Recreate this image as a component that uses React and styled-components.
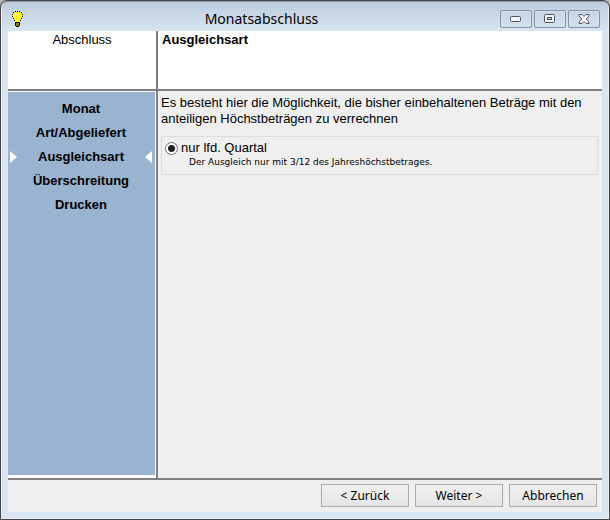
import React from "react";
import styled, { createGlobalStyle } from "styled-components";

const GlobalStyle = createGlobalStyle`
  * {
    box-sizing: border-box;
  }
  body {
    margin: 0;
    background-color: #b5b5b3;
    color: #000;
    font-family: "Liberation Sans", Arial, sans-serif;
    font-size: 13px;
    line-height: 16px;
  }
`;

const Window = styled.div`
  display: flex;
  flex-direction: column;
  min-height: 100vh;
  padding: 0 7px 7px;
  border: 1px solid #45464b;
  border-radius: 7px 7px 0 0;
  background: linear-gradient(#bccbdc, #d7e4f2 30px);
  box-shadow: inset 0 1px #8d98a6, inset 1px 0 #e6eef7, inset -1px -1px #e6eef7;
`;

const TitleBar = styled.header`
  display: grid;
  grid-template-columns: auto 1fr auto;
  align-items: center;
  height: 30px;
  padding: 6px 2px 0 4px;
`;

const Title = styled.h1`
  margin: 0;
  font-family: "Noto Sans", sans-serif;
  font-size: 14px;
  font-weight: 400;
  line-height: 20px;
  text-align: center;
`;

const WindowControls = styled.div`
  display: flex;
  justify-content: flex-end;
  gap: 2px;
`;

const ControlButton = styled.button`
  display: flex;
  align-items: center;
  justify-content: center;
  width: 32px;
  height: 18px;
  padding: 0;
  border: 1px solid #8393a8;
  border-radius: 2px;
  background-color: transparent;
  box-shadow: inset 0 0 0 1px #d3dfec;
`;

const Content = styled.div`
  flex: 1;
  display: grid;
  grid-template-columns: 150px 1fr;
  grid-template-rows: 60px 1fr auto;
  background-color: #efefef;
`;

const HeaderCell = styled.div`
  padding: 1px 4px;
  border-bottom: 2px solid #808080;
  background-color: #fff;
  text-align: ${({ $center }) => ($center ? "center" : "left")};
  font-weight: ${({ $center }) => ($center ? 400 : 700)};
  border-right: ${({ $center }) => ($center ? "2px solid #808080" : "none")};
`;

const SidebarCell = styled.div`
  display: flex;
  padding: 1px 1px 3px 0;
  border-right: 2px solid #808080;
  background-color: #fafafa;
`;

const Steps = styled.ol`
  flex: 1;
  margin: 0;
  padding: 5px 3px 5px 2px;
  background-color: #99b3d0;
  list-style: none;
`;

const Step = styled.li`
  display: flex;
  align-items: center;
  justify-content: ${({ $active }) => ($active ? "space-between" : "center")};
  height: 24px;
  font-weight: 700;
`;

const Main = styled.main`
  padding: 4px 4px 4px 3px;
`;

const Intro = styled.p`
  margin: 0 0 9px;
`;

const OptionBox = styled.div`
  display: grid;
  grid-template-columns: auto 1fr;
  column-gap: 3px;
  align-items: center;
  padding: 3px 3px 6px;
  border: 1px solid #dcdcdc;
`;

const Radio = styled.input`
  appearance: none;
  width: 13px;
  height: 13px;
  margin: 0;
  border: 1px solid #707070;
  border-radius: 50%;
  background-color: #fff;
  &:checked {
    background-image: radial-gradient(circle, #222 3px, transparent 4px);
  }
`;

const Hint = styled.small`
  grid-column: 2;
  padding-left: 8px;
  font-family: "DejaVu Sans", sans-serif;
  font-size: 9px;
  line-height: 12px;
`;

const Footer = styled.footer`
  grid-column: 1 / -1;
  display: flex;
  justify-content: flex-end;
  gap: 6px;
  padding: 4px 5px 5px;
  border-top: 2px solid #808080;
`;

const Button = styled.button`
  width: 88px;
  height: 23px;
  padding: 0;
  border: 1px solid #acacac;
  background: linear-gradient(#f0f0f0, #e5e5e5);
  color: #000;
  font-family: "Noto Sans", sans-serif;
  font-size: 12px;
`;

const steps = ["Monat", "Art/Abgeliefert", "Ausgleichsart", "Überschreitung", "Drucken"];

function BulbIcon() {
  return (
    <svg width="11" height="16" viewBox="0 0 11 16" shapeRendering="crispEdges" aria-hidden="true">
      <path d="M3 1h5v1h1v1h1v4H9v1H8v2H7v1H4v-1H3V8H2V7H1V3h1V2h1z" fill="#ff0" />
      <path d="M3 3h2v1H4v2H3z" fill="#fff" />
      <path
        d="M3 0h1v1H3zM5 0h1v1H5zM7 0h1v1H7zM1 1h1v1H1zM9 1h1v1H9zM0 3h1v1H0zM10 3h1v1h-1zM0 5h1v1H0zM10 5h1v1h-1zM1 7h1v1H1zM9 7h1v1H9zM2 9h1v1H2zM8 9h1v1H8zM3 11h5v1H3zM3 12h1v3H3zM7 12h1v3H7zM4 15h3v1H4z"
        fill="#000"
      />
      <path d="M4 12h3v3H4z" fill="#808000" />
    </svg>
  );
}

function Arrow({ left }) {
  return (
    <svg width="7" height="12" viewBox="0 0 7 12" aria-hidden="true">
      <path d={left ? "M7 0v12L0 6z" : "M0 0v12l7-6z"} fill="#fff" />
    </svg>
  );
}

function App() {
  const [active, setActive] = React.useState(2);

  return (
    <>
      <GlobalStyle />
      <Window>
        <TitleBar>
          <BulbIcon />
          <Title>Monatsabschluss</Title>
          <WindowControls>
            <ControlButton aria-label="Minimieren">
              <svg width="12" height="6" viewBox="0 0 12 6">
                <rect x="0.5" y="0.5" width="10" height="5" rx="1" fill="#f4f4f4" stroke="#4e5361" />
              </svg>
            </ControlButton>
            <ControlButton aria-label="Maximieren">
              <svg width="12" height="10" viewBox="0 0 12 10">
                <rect x="0.5" y="0.5" width="10" height="8" rx="1" fill="#f4f4f4" stroke="#4e5361" />
                <rect x="3.5" y="3.5" width="4" height="2" fill="#c8d4e2" stroke="#4e5361" />
              </svg>
            </ControlButton>
            <ControlButton aria-label="Schließen">
              <svg width="12" height="10" viewBox="0 0 12 10">
                <path
                  d="M1 .5h3l2 2 2-2h3v1.500L8.200 5 11 8v1.500H8l-2-2-2 2H1V8l2.800-3L1 2z"
                  fill="#f8f8f8"
                  stroke="#4e5361"
                />
              </svg>
            </ControlButton>
          </WindowControls>
        </TitleBar>
        <Content>
          <HeaderCell $center>Abschluss</HeaderCell>
          <HeaderCell>Ausgleichsart</HeaderCell>
          <SidebarCell>
            <Steps>
              {steps.map((step, index) => (
                <Step key={step} $active={index === active}>
                  {index === active && <Arrow />}
                  {step}
                  {index === active && <Arrow left />}
                </Step>
              ))}
            </Steps>
          </SidebarCell>
          <Main>
            <Intro>
              Es besteht hier die Möglichkeit, die bisher einbehaltenen Beträge mit den anteiligen
              Höchstbeträgen zu verrechnen
            </Intro>
            <OptionBox>
              <Radio type="radio" id="quartal" name="ausgleich" aria-describedby="quartal-hint" defaultChecked />
              <label htmlFor="quartal">nur lfd. Quartal</label>
              <Hint id="quartal-hint">Der Ausgleich nur mit 3/12 des Jahreshöchstbetrages.</Hint>
            </OptionBox>
          </Main>
          <Footer>
            <Button onClick={() => setActive(Math.max(active - 1, 0))}>&lt; Zurück</Button>
            <Button onClick={() => setActive(Math.min(active + 1, steps.length - 1))}>Weiter &gt;</Button>
            <Button>Abbrechen</Button>
          </Footer>
        </Content>
      </Window>
    </>
  );
}

export default App;
